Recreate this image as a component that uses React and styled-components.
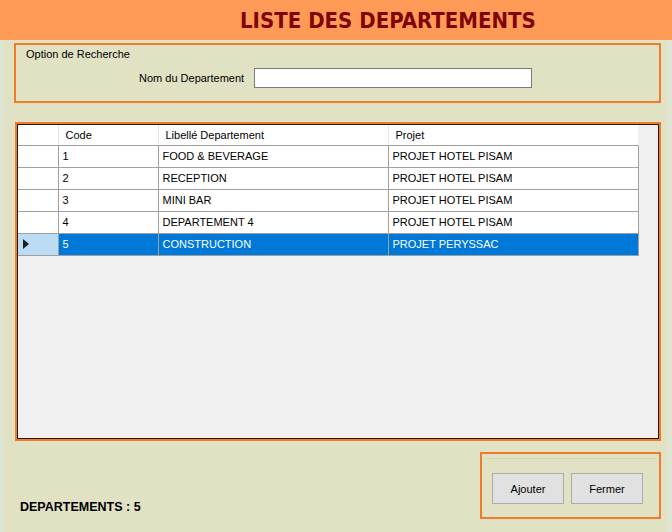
import styled, { createGlobalStyle } from "styled-components";

const GlobalStyle = createGlobalStyle`
  html, body {
    margin: 0;
    padding: 0;
    background: #e1e1c4;
  }
  * {
    box-sizing: border-box;
  }
`;

const Window = styled.div`
  width: 672px;
  height: 532px;
  display: flex;
  flex-direction: column;
  background: #e1e1c4;
  font-family: "Liberation Sans", Arial, sans-serif;
  font-size: 11px;
  color: #000;
  overflow: hidden;
`;

const TitleBar = styled.div`
  height: 40px;
  flex-shrink: 0;
  display: flex;
  align-items: center;
  padding-left: 240px;
  padding-top: 1px;
  background: #ff9a57;
`;

const Title = styled.h1`
  margin: 0;
  font-family: "DejaVu Sans Condensed", "DejaVu Sans", sans-serif;
  font-size: 22px;
  font-weight: bold;
  color: #7f0505;
`;

const Content = styled.div`
  flex: 1;
  display: flex;
  flex-direction: column;
  padding: 3px 6px 0 10px;
  border-left: 4px solid #dfe5d3;
  border-right: 5px solid #dfe5d3;
`;

const SearchGroup = styled.fieldset`
  margin: 0;
  height: 60px;
  border: 2px solid #ef7b2c;
  padding: 3px 0 0 10px;
  display: flex;
  flex-direction: column;
`;

const GroupLabel = styled.div`
  font-size: 11px;
  line-height: 13px;
`;

const SearchRow = styled.div`
  display: flex;
  align-items: center;
  margin-top: 7px;
  padding-left: 113px;
  gap: 10px;
`;

const FieldLabel = styled.label`
  font-size: 11px;
`;

const TextInput = styled.input`
  width: 278px;
  height: 20px;
  border: 1px solid #7a7a7a;
  background: #fff;
  outline: none;
`;

const GridFrame = styled.div`
  margin-top: 19px;
  margin-left: 1px;
  height: 319px;
  border: 2px solid #ef7b2c;
  display: flex;
`;

const GridInner = styled.div`
  flex: 1;
  border: 1px solid #2a1205;
  background: #f0f0f0;
`;

const Table = styled.table`
  border-collapse: collapse;
  table-layout: fixed;
  width: 620px;
  font-size: 11px;
`;

const HeadCell = styled.th`
  height: 20px;
  padding: 0 0 0 ${(p) => p.$pad || 7}px;
  text-align: left;
  font-weight: normal;
  background: #fff;
  border-left: 1px solid #e4e4e4;
  border-bottom: 1px solid #a0a0a0;
  &:first-child {
    border-left: none;
  }
`;

const RowHeader = styled.td`
  height: 22px;
  padding: 0 0 0 5px;
  background: ${(p) => (p.$selected ? "#bcdcf4" : "#fff")};
  border-bottom: 1px solid #a0a0a0;
`;

const Cell = styled.td`
  height: 22px;
  padding: 0 0 0 4px;
  white-space: nowrap;
  overflow: hidden;
  background: ${(p) => (p.$selected ? "#0078d7" : "#fff")};
  color: ${(p) => (p.$selected ? "#fff" : "#000")};
  border: 1px solid #a0a0a0;
  border-top: none;
`;

const Arrow = styled.svg`
  display: block;
`;

const Footer = styled.div`
  flex: 1;
  display: flex;
  align-items: flex-start;
  justify-content: space-between;
  padding-top: 11px;
  padding-left: 6px;
`;

const Count = styled.div`
  margin-top: 48px;
  font-weight: bold;
  font-size: 12.5px;
`;

const ButtonGroup = styled.div`
  width: 181px;
  height: 67px;
  border: 2px solid #ef7b2c;
  display: flex;
  gap: 7px;
  padding: 19px 0 0 10px;
  position: relative;
  &::before {
    content: "";
    position: absolute;
    left: 3px;
    right: 3px;
    top: 4px;
    border-top: 1px solid #d4d4ba;
  }
`;

const Button = styled.button`
  width: 72px;
  height: 31px;
  background: #e1e1e1;
  border: 1px solid #adadad;
  font-family: "Liberation Sans", Arial, sans-serif;
  font-size: 11px;
  color: #000;
  padding: 0;
`;

const rows = [
  { code: "1", libelle: "FOOD & BEVERAGE", projet: "PROJET HOTEL PISAM" },
  { code: "2", libelle: "RECEPTION", projet: "PROJET HOTEL PISAM" },
  { code: "3", libelle: "MINI BAR", projet: "PROJET HOTEL PISAM" },
  { code: "4", libelle: "DEPARTEMENT 4", projet: "PROJET HOTEL PISAM" },
  { code: "5", libelle: "CONSTRUCTION", projet: "PROJET PERYSSAC", selected: true },
];

export default function App() {
  return (
    <Window>
      <GlobalStyle />
      <TitleBar>
        <Title>LISTE DES DEPARTEMENTS</Title>
      </TitleBar>
      <Content>
        <SearchGroup>
          <GroupLabel>Option de Recherche</GroupLabel>
          <SearchRow>
            <FieldLabel>Nom du Departement</FieldLabel>
            <TextInput />
          </SearchRow>
        </SearchGroup>
        <GridFrame>
          <GridInner>
            <Table>
              <colgroup>
                <col style={{ width: 40 }} />
                <col style={{ width: 100 }} />
                <col style={{ width: 230 }} />
                <col style={{ width: 250 }} />
              </colgroup>
              <thead>
                <tr>
                  <HeadCell />
                  <HeadCell>Code</HeadCell>
                  <HeadCell>Libellé Departement</HeadCell>
                  <HeadCell>Projet</HeadCell>
                </tr>
              </thead>
              <tbody>
                {rows.map((r) => (
                  <tr key={r.code}>
                    <RowHeader $selected={r.selected}>
                      {r.selected && (
                        <Arrow width="6" height="10" viewBox="0 0 6 10">
                          <path d="M0 0 L6 5 L0 10 Z" fill="#202020" />
                        </Arrow>
                      )}
                    </RowHeader>
                    <Cell $selected={r.selected}>{r.code}</Cell>
                    <Cell $selected={r.selected}>{r.libelle}</Cell>
                    <Cell $selected={r.selected}>{r.projet}</Cell>
                  </tr>
                ))}
              </tbody>
            </Table>
          </GridInner>
        </GridFrame>
        <Footer>
          <Count>DEPARTEMENTS : 5</Count>
          <ButtonGroup>
            <Button>Ajouter</Button>
            <Button>Fermer</Button>
          </ButtonGroup>
        </Footer>
      </Content>
    </Window>
  );
}
